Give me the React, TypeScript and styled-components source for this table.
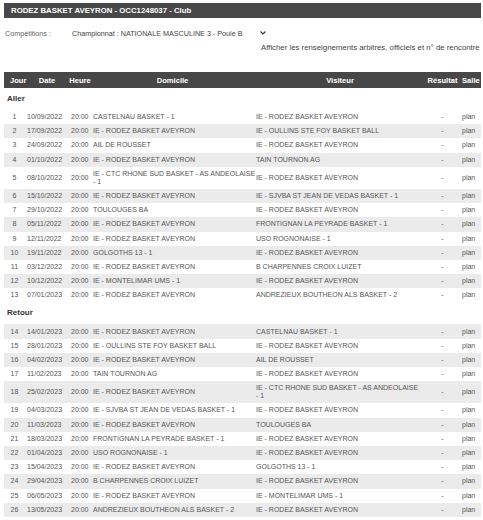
import React from "react";
import styled, { createGlobalStyle } from "styled-components";

const Global = createGlobalStyle`
  html, body { margin: 0; padding: 0; background: #fff; overflow: hidden; }
  body { font-family: "Liberation Sans", Arial, sans-serif; color: #555; }
`;

const Page = styled.div`
  width: 483px;
  height: 520px;
  overflow: hidden;
  padding: 3px 0 0 4px;
  box-sizing: border-box;
`;

const TitleBar = styled.div`
  width: 477px;
  height: 15px;
  background: #484848;
  color: #fff;
  font-weight: bold;
  font-size: 7.8px;
  line-height: 15px;
  padding-left: 7px;
  box-sizing: border-box;
  white-space: nowrap;
`;

const CompRow = styled.div`
  display: flex;
  align-items: center;
  height: 14px;
  margin-top: 8px;
  font-size: 7.2px;
  white-space: nowrap;
`;

const CompLabel = styled.div`
  width: 67px;
  padding-left: 1px;
  color: #666;
`;

const Select = styled.div`
  width: 194px;
  display: flex;
  align-items: center;
  justify-content: space-between;
  color: #444;
`;

const Info = styled.div`
  margin-top: 2px;
  height: 12px;
  line-height: 12px;
  padding-left: 257px;
  font-size: 7.8px;
  color: #444;
  white-space: nowrap;
`;

const Table = styled.div`
  width: 477px;
  margin-top: 18px;
  overflow: hidden;
`;

const cols = "21px 44px 22px 163px 172px 33px 40px";

const HeadRow = styled.div`
  display: grid;
  grid-template-columns: ${cols};
  height: 16px;
  align-items: center;
  background: #474747;
  color: #fff;
  font-weight: bold;
  font-size: 7.6px;
  white-space: nowrap;
`;

const HeadCell = styled.div<{ $align?: string; $pad?: number }>`
  text-align: ${(p) => p.$align || "center"};
  padding-left: ${(p) => p.$pad || 0}px;
`;

const Section = styled.div`
  height: 22px;
  line-height: 22px;
  padding-left: 3px;
  font-weight: bold;
  font-size: 8px;
  color: #333;
`;

const Row = styled.div<{ $stripe: boolean }>`
  display: grid;
  grid-template-columns: ${cols};
  align-items: center;
  background: ${(p) => (p.$stripe ? "#ebebeb" : "#fff")};
  font-size: 7px;
  line-height: 8px;
  color: #555;
`;

const Cell = styled.div<{ $align?: string; $pad?: number }>`
  padding: 3.1px 0 3.1px ${(p) => p.$pad ?? 2}px;
  text-align: ${(p) => p.$align || "left"};
  white-space: nowrap;
`;

const TeamCell = styled.div`
  padding: 3.1px 4px 3.1px 2px;
  white-space: pre;
  overflow: visible;
`;

const Chevron = () => (
  <svg width="6" height="4" viewBox="0 0 6 4">
    <path d="M0.5 0.5 L3 3 L5.5 0.5" stroke="#333" strokeWidth="1.1" fill="none" />
  </svg>
);

type Match = [number, string, string, string];

const aller: Match[] = [
  [1, "10/09/2022", "CASTELNAU BASKET - 1", "IE - RODEZ BASKET AVEYRON"],
  [2, "17/09/2022", "IE - RODEZ BASKET AVEYRON", "IE - OULLINS STE FOY BASKET BALL"],
  [3, "24/09/2022", "AIL DE ROUSSET", "IE - RODEZ BASKET AVEYRON"],
  [4, "01/10/2022", "IE - RODEZ BASKET AVEYRON", "TAIN TOURNON AG"],
  [5, "08/10/2022", "IE - CTC RHONE SUD BASKET - AS ANDEOLAISE\n- 1", "IE - RODEZ BASKET AVEYRON"],
  [6, "15/10/2022", "IE - RODEZ BASKET AVEYRON", "IE - SJVBA ST JEAN DE VEDAS BASKET - 1"],
  [7, "29/10/2022", "TOULOUGES BA", "IE - RODEZ BASKET AVEYRON"],
  [8, "05/11/2022", "IE - RODEZ BASKET AVEYRON", "FRONTIGNAN LA PEYRADE BASKET - 1"],
  [9, "12/11/2022", "IE - RODEZ BASKET AVEYRON", "USO ROGNONAISE - 1"],
  [10, "19/11/2022", "GOLGOTHS 13 - 1", "IE - RODEZ BASKET AVEYRON"],
  [11, "03/12/2022", "IE - RODEZ BASKET AVEYRON", "B CHARPENNES CROIX LUIZET"],
  [12, "10/12/2022", "IE - MONTELIMAR UMS - 1", "IE - RODEZ BASKET AVEYRON"],
  [13, "07/01/2023", "IE - RODEZ BASKET AVEYRON", "ANDREZIEUX BOUTHEON ALS BASKET - 2"],
];

const retour: Match[] = [
  [14, "14/01/2023", "IE - RODEZ BASKET AVEYRON", "CASTELNAU BASKET - 1"],
  [15, "28/01/2023", "IE - OULLINS STE FOY BASKET BALL", "IE - RODEZ BASKET AVEYRON"],
  [16, "04/02/2023", "IE - RODEZ BASKET AVEYRON", "AIL DE ROUSSET"],
  [17, "11/02/2023", "TAIN TOURNON AG", "IE - RODEZ BASKET AVEYRON"],
  [18, "25/02/2023", "IE - RODEZ BASKET AVEYRON", "IE - CTC RHONE SUD BASKET - AS ANDEOLAISE\n- 1"],
  [19, "04/03/2023", "IE - SJVBA ST JEAN DE VEDAS BASKET - 1", "IE - RODEZ BASKET AVEYRON"],
  [20, "11/03/2023", "IE - RODEZ BASKET AVEYRON", "TOULOUGES BA"],
  [21, "18/03/2023", "FRONTIGNAN LA PEYRADE BASKET - 1", "IE - RODEZ BASKET AVEYRON"],
  [22, "01/04/2023", "USO ROGNONAISE - 1", "IE - RODEZ BASKET AVEYRON"],
  [23, "15/04/2023", "IE - RODEZ BASKET AVEYRON", "GOLGOTHS 13 - 1"],
  [24, "29/04/2023", "B CHARPENNES CROIX LUIZET", "IE - RODEZ BASKET AVEYRON"],
  [25, "06/05/2023", "IE - RODEZ BASKET AVEYRON", "IE - MONTELIMAR UMS - 1"],
  [26, "13/05/2023", "ANDREZIEUX BOUTHEON ALS BASKET - 2", "IE - RODEZ BASKET AVEYRON"],
];

const MatchRow = ({ m }: { m: Match }) => (
  <Row $stripe={m[0] % 2 === 0}>
    <Cell $align="center" $pad={0}>{m[0]}</Cell>
    <Cell>{m[1]}</Cell>
    <Cell>20:00</Cell>
    <TeamCell>{m[2]}</TeamCell>
    <TeamCell>{m[3]}</TeamCell>
    <Cell $align="center" $pad={0}>-</Cell>
    <Cell $pad={3}>plan</Cell>
  </Row>
);

export default function App() {
  return (
    <>
      <Global />
      <Page>
        <TitleBar>RODEZ BASKET AVEYRON - OCC1248037 - Club</TitleBar>
        <CompRow>
          <CompLabel>Compétitions :</CompLabel>
          <Select>
            <span>Championnat : NATIONALE MASCULINE 3 - Poule B</span>
            <Chevron />
          </Select>
        </CompRow>
        <Info>Afficher les renseignements arbitres, officiels et n° de rencontre</Info>
        <Table>
          <HeadRow>
            <HeadCell $align="left" $pad={6}>Jour</HeadCell>
            <HeadCell>Date</HeadCell>
            <HeadCell>Heure</HeadCell>
            <HeadCell>Domicile</HeadCell>
            <HeadCell>Visiteur</HeadCell>
            <HeadCell>Résultat</HeadCell>
            <HeadCell $align="left" $pad={3}>Salle</HeadCell>
          </HeadRow>
          <Section>Aller</Section>
          {aller.map((m) => (
            <MatchRow key={m[0]} m={m} />
          ))}
          <Section>Retour</Section>
          {retour.map((m) => (
            <MatchRow key={m[0]} m={m} />
          ))}
        </Table>
      </Page>
    </>
  );
}
